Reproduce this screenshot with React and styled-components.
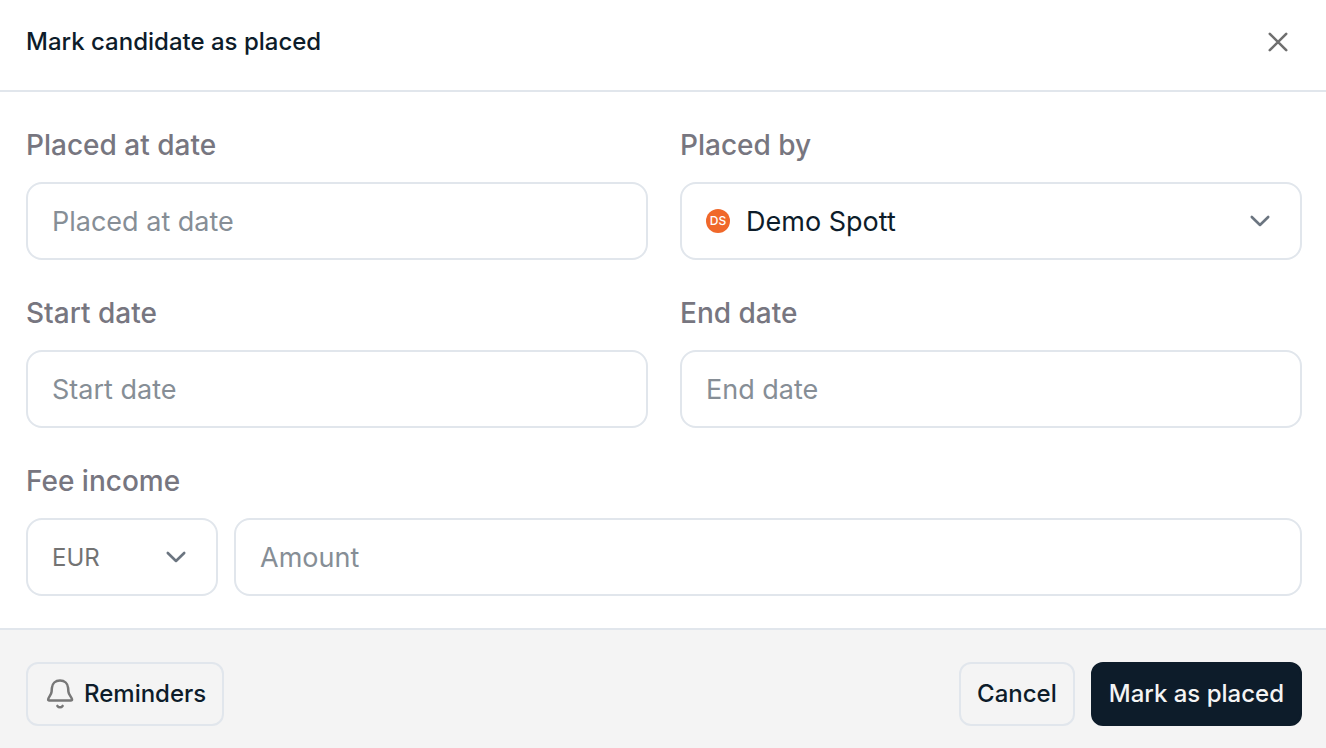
import React from "react";
import styled, { createGlobalStyle, css } from "styled-components";

const navy = "#0d1c2a";
const line = "#e1e6ec";

const GlobalStyle = createGlobalStyle`
  *, *::before, *::after { box-sizing: border-box; }
  body {
    margin: 0;
    background: #fff;
    color: ${navy};
    font-family: Inter, "Liberation Sans", sans-serif;
  }
  button, input, select { font-family: inherit; color: inherit; }
`;

const Dialog = styled.form`
  display: flex;
  flex-direction: column;
  min-height: 100vh;
`;

const Header = styled.header`
  display: flex;
  align-items: center;
  justify-content: space-between;
  padding: 18px 24px 24px 26px;
  border-bottom: 2px solid ${line};
`;

const Title = styled.h1`
  margin: 0;
  font-size: 24px;
  line-height: 32px;
  font-weight: 500;
`;

const CloseButton = styled.button`
  display: flex;
  align-items: center;
  justify-content: center;
  width: 48px;
  height: 48px;
  padding: 0;
  border: 0;
  background: none;
  color: #6f6f6f;
  cursor: pointer;
`;

const Body = styled.div`
  display: grid;
  grid-template-columns: 1fr 1fr;
  gap: 32px;
  padding: 32px 24px 32px 26px;
`;

const Field = styled.div`
  display: flex;
  flex-direction: column;
  gap: 16px;
  min-width: 0;
  ${(p) => p.$wide && css`grid-column: 1 / -1;`}
`;

const Label = styled.label`
  font-size: 28px;
  line-height: 42px;
  font-weight: 500;
  color: #777680;
`;

const control = css`
  height: 78px;
  border: 2px solid ${line};
  border-radius: 16px;
  background: #fff;
`;

const TextInput = styled.input`
  ${control}
  flex: 1 0 auto;
  min-width: 0;
  padding: 0 24px;
  font-size: 27px;
  &::placeholder { color: #868e96; opacity: 1; }
`;

const SelectBox = styled.div`
  ${control}
  display: flex;
  align-items: center;
  gap: 16px;
  padding: 0 24px;
  width: ${(p) => p.$width || "auto"};
`;

const Select = styled.select`
  appearance: none;
  flex: 1;
  min-width: 0;
  height: 100%;
  margin-right: -48px;
  padding: 0 48px 0 0;
  border: 0;
  outline: 0;
  background: none;
  font-size: ${(p) => (p.$muted ? "24px" : "27px")};
  color: ${(p) => (p.$muted ? "#737373" : navy)};
`;

const Avatar = styled.span`
  display: flex;
  align-items: center;
  justify-content: center;
  width: 24px;
  height: 24px;
  border-radius: 50%;
  background: #f0682a;
  color: #fff;
  font-size: 12px;
  line-height: 12px;
  font-weight: 500;
`;

const Icon = styled.svg`
  flex: none;
  width: 32px;
  height: 32px;
  fill: none;
  stroke: currentColor;
  stroke-linecap: round;
  stroke-linejoin: round;
  pointer-events: none;
`;

const ChevronIcon = styled(Icon)`
  color: #6b7580;
`;

const BellIcon = styled(Icon)`
  color: #777;
`;

const FeeRow = styled.div`
  display: flex;
  gap: 16px;
`;

const Footer = styled.footer`
  flex: 1;
  display: flex;
  align-items: flex-start;
  justify-content: space-between;
  padding: 32px 24px 22px 26px;
  border-top: 2px solid ${line};
  background: #f4f4f4;
`;

const Actions = styled.div`
  display: flex;
  gap: 16px;
`;

const Button = styled.button`
  display: flex;
  align-items: center;
  gap: 8px;
  height: 64px;
  padding: 0 16px;
  border: 2px solid ${line};
  border-radius: 12px;
  background: transparent;
  font-size: 24px;
  line-height: 32px;
  font-weight: 500;
  white-space: nowrap;
  cursor: pointer;
  ${(p) =>
    p.$primary &&
    css`
      border-color: ${navy};
      background: ${navy};
      color: #f4f4f4;
    `}
`;

const Chevron = () => (
  <ChevronIcon viewBox="0 0 32 32" strokeWidth="2.6" aria-hidden="true">
    <path d="M7.8 12 16 20l8.200-8" />
  </ChevronIcon>
);

const DateField = ({ id, label }) => (
  <Field>
    <Label htmlFor={id}>{label}</Label>
    <TextInput id={id} type="text" placeholder={label} />
  </Field>
);

export default function App() {
  return (
    <>
      <GlobalStyle />
      <Dialog onSubmit={(e) => e.preventDefault()}>
        <Header>
          <Title>Mark candidate as placed</Title>
          <CloseButton type="button" aria-label="Close">
            <Icon viewBox="0 0 32 32" strokeWidth="2.6" aria-hidden="true">
              <path d="M7.800 7.800 24.200 24.200M24.200 7.800 7.800 24.200" />
            </Icon>
          </CloseButton>
        </Header>
        <Body>
          <DateField id="placed-at" label="Placed at date" />
          <Field>
            <Label htmlFor="placed-by">Placed by</Label>
            <SelectBox>
              <Avatar aria-hidden="true">DS</Avatar>
              <Select id="placed-by">
                <option>Demo Spott</option>
              </Select>
              <Chevron />
            </SelectBox>
          </Field>
          <DateField id="start-date" label="Start date" />
          <DateField id="end-date" label="End date" />
          <Field $wide>
            <Label htmlFor="amount">Fee income</Label>
            <FeeRow>
              <SelectBox $width="192px">
                <Select $muted aria-label="Currency">
                  <option>EUR</option>
                </Select>
                <Chevron />
              </SelectBox>
              <TextInput id="amount" type="text" inputMode="decimal" placeholder="Amount" />
            </FeeRow>
          </Field>
        </Body>
        <Footer>
          <Button type="button">
            <BellIcon viewBox="0 0 32 32" strokeWidth="2.5" aria-hidden="true">
              <path d="M16 2.500C11.300 2.500 8.200 5.600 7.900 9.800L7.600 13.600C7.300 17 4.800 18.600 4.200 21.200C4 22.100 4.500 22.600 5.300 22.600H26.900C27.700 22.600 28.200 22.100 28 21.200C27.400 18.600 24.700 17 24.400 13.600L24.100 9.800C23.800 5.600 20.700 2.500 16 2.500Z" />
              <path d="M13.400 27.900C14.800 29.700 17.200 29.700 18.600 27.900" />
            </BellIcon>
            Reminders
          </Button>
          <Actions>
            <Button type="button">Cancel</Button>
            <Button type="submit" $primary>Mark as placed</Button>
          </Actions>
        </Footer>
      </Dialog>
    </>
  );
}
